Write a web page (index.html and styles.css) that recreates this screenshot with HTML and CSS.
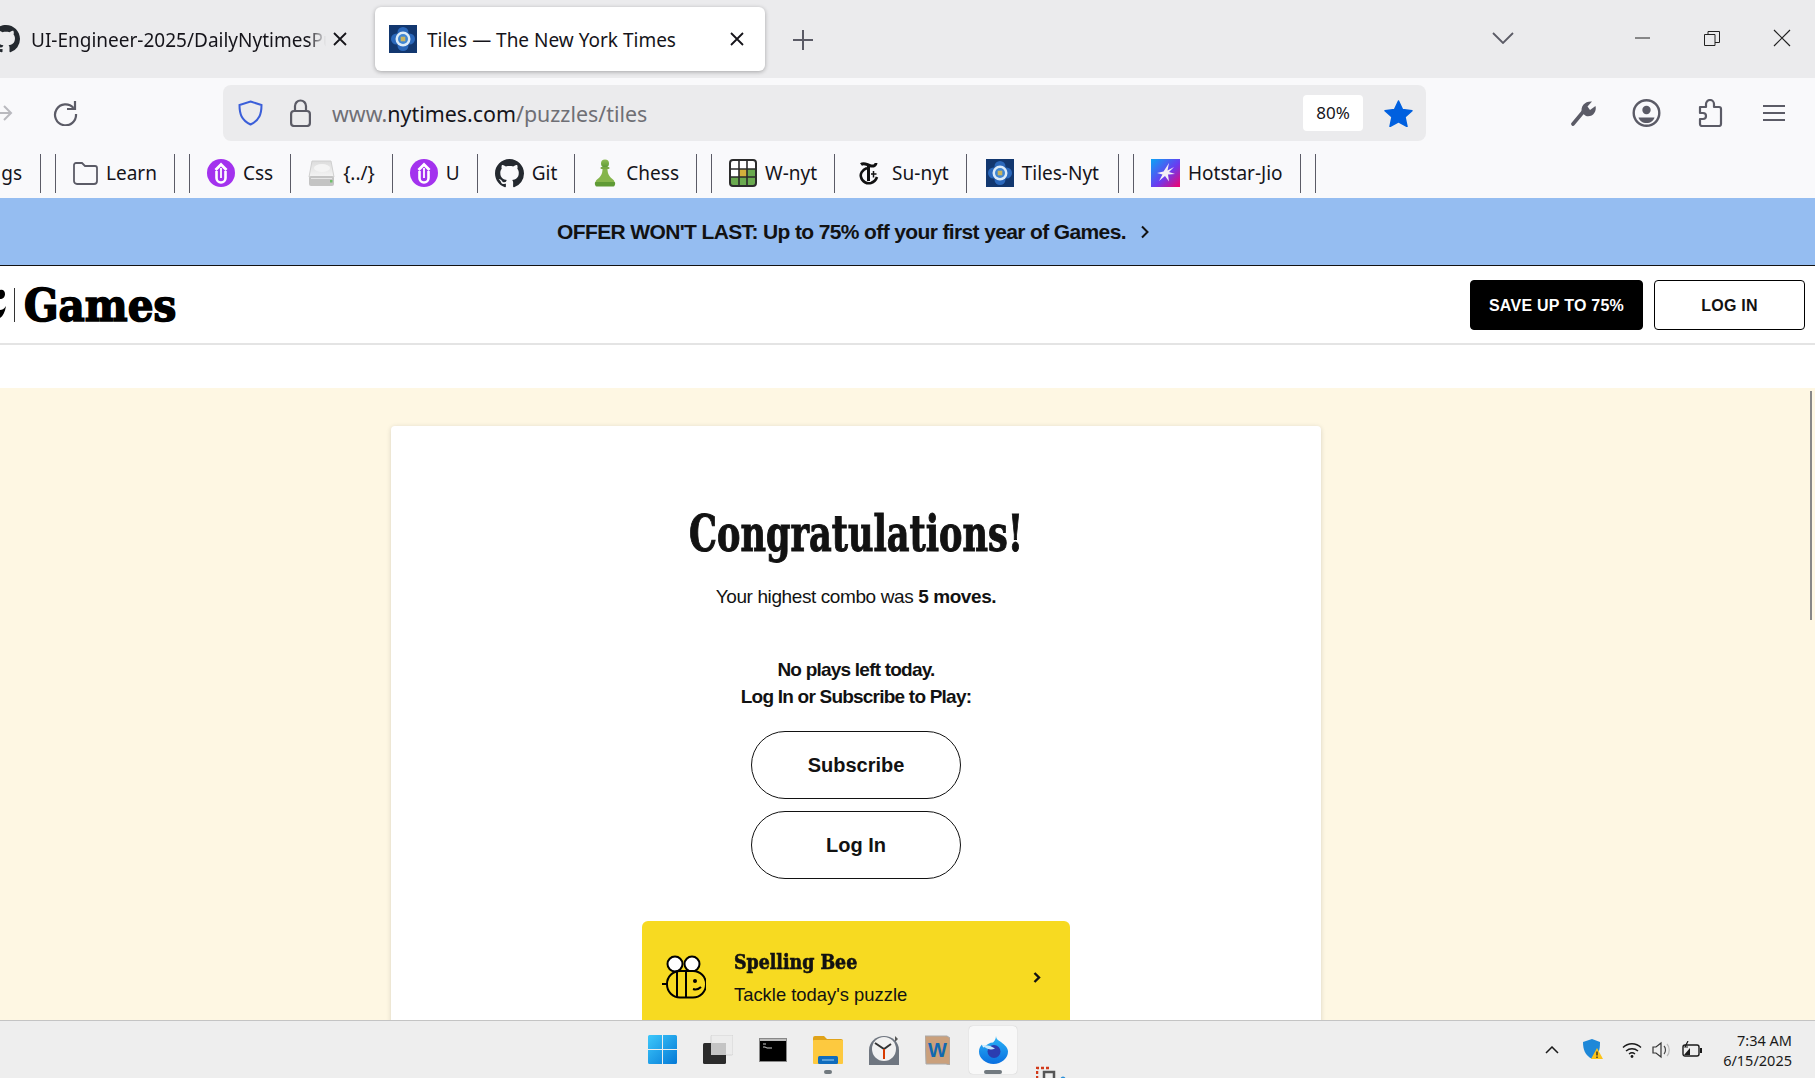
FILE: index.html
```html
<!DOCTYPE html>
<html lang="en">

<head>
  <meta charset="UTF-8" />
  <title>Tiles — The New York Times</title>
  <link rel="stylesheet" href="styles.css">
</head>

<body>
  <svg class="defs" width="0" height="0">
    <symbol id="gh" viewBox="0 0 16 16">
      <path d="M8 0C3.58 0 0 3.58 0 8c0 3.54 2.29 6.53 5.47 7.59.4.07.55-.17.55-.38 0-.19-.01-.82-.01-1.49-2.01.37-2.53-.49-2.69-.94-.09-.23-.48-.94-.82-1.13-.28-.15-.68-.52-.01-.53.63-.01 1.08.58 1.23.82.72 1.21 1.87.87 2.33.66.07-.52.28-.87.51-1.07-1.78-.2-3.64-.89-3.64-3.95 0-.87.31-1.59.82-2.15-.08-.2-.36-1.02.08-2.12 0 0 .67-.21 2.2.82.64-.18 1.32-.27 2-.27.68 0 1.36.09 2 .27 1.53-1.04 2.2-.82 2.2-.82.44 1.1.16 1.92.08 2.12.51.56.82 1.27.82 2.15 0 3.07-1.87 3.75-3.65 3.95.29.25.54.73.54 1.48 0 1.07-.01 1.93-.01 2.2 0 .21.15.46.55.38A8.013 8.013 0 0016 8c0-4.42-3.58-8-8-8z" fill="#24292f" />
    </symbol>
    <symbol id="tiles" viewBox="0 0 28 28">
      <rect width="28" height="28" fill="#12376f" />
      <circle cx="14" cy="7.500" r="5.500" fill="#2b68bb" />
      <circle cx="14" cy="20.500" r="5.500" fill="#2b68bb" />
      <circle cx="7.500" cy="14" r="5.500" fill="#2b68bb" />
      <circle cx="20.500" cy="14" r="5.500" fill="#2b68bb" />
      <circle cx="14" cy="14" r="7.500" fill="#dcebf8" />
      <circle cx="14" cy="14" r="5" fill="#3f86d4" />
      <rect x="11.700" y="11.700" width="4.600" height="4.600" fill="#c9b45e" />
    </symbol>
    <symbol id="upw" viewBox="0 0 28 28">
      <circle cx="14" cy="14" r="14" fill="#a332ee" />
      <path d="M8.500 11L14 5.500l5.500 5.500" fill="none" stroke="#fff" stroke-width="2.800" />
      <path d="M9.500 12v7a4.500 4.500 0 0 0 9 0v-7" fill="none" stroke="#fff" stroke-width="2.600" />
      <path d="M14 9v10" stroke="#fff" stroke-width="1.800" />
    </symbol>
  </svg>

  <div class="window">
    <div class="tabbar">
      <div class="tab">
        <svg class="tab-gh" width="28" height="28"><use href="#gh" /></svg>
        <span class="tab-title tab-fade">UI-Engineer-2025/DailyNytimesPuzzles</span>
        <svg class="tab-close" viewBox="0 0 16 16" width="16" height="16"><path d="M2 2l12 12M14 2L2 14" stroke="#15141a" stroke-width="1.800" /></svg>
      </div>
      <div class="tab tab-active">
        <svg width="28" height="28"><use href="#tiles" /></svg>
        <span class="tab-title">Tiles — The New York Times</span>
        <svg class="tab-close" viewBox="0 0 16 16" width="16" height="16"><path d="M2 2l12 12M14 2L2 14" stroke="#15141a" stroke-width="1.800" /></svg>
      </div>
      <svg class="new-tab" viewBox="0 0 20 20" width="20" height="20"><path d="M10 0v20M0 10h20" stroke="#5b5b66" stroke-width="2" /></svg>
      <div class="window-controls">
        <svg class="tab-list" viewBox="0 0 22 12" width="22" height="12"><path d="M1 1l10 10L21 1" fill="none" stroke="#5b5b66" stroke-width="1.800" /></svg>
        <svg class="win-min" viewBox="0 0 15 2" width="15" height="2"><path d="M0 1h15" stroke="#222" stroke-width="1" /></svg>
        <svg class="win-restore" viewBox="0 0 16 15" width="16" height="15"><path d="M.5 3.500h10.500v11H.5zM4 3.500V.5h11.500v11H11" fill="none" stroke="#222" /></svg>
        <svg class="win-close" viewBox="0 0 18 18" width="18" height="18"><path d="M1 1l16 16M17 1L1 17" stroke="#222" stroke-width="1.200" /></svg>
      </div>
    </div>

    <div class="toolbar">
      <svg class="nav-forward" viewBox="0 0 20 20" width="20" height="20"><path d="M-4 10h21M10 3l7 7-7 7" fill="none" stroke="#b9b9be" stroke-width="2" /></svg>
      <svg class="nav-reload" viewBox="0 0 26 26" width="26" height="26"><path d="M21.500 8A10.500 10.500 0 1 0 24 14" fill="none" stroke="#5b5b66" stroke-width="2.200" /><path d="M23 1v8h-8" fill="none" stroke="#5b5b66" stroke-width="2.200" /></svg>
      <div class="urlbar">
        <svg viewBox="0 0 25 26" width="25" height="26"><path d="M12.500 1.500L23.500 5c0 9-2 15-11 19.500C3.500 20 1.500 14 1.500 5z" fill="none" stroke="#3b5fd9" stroke-width="2" /></svg>
        <svg class="url-lock" viewBox="0 0 21 28" width="21" height="28"><path d="M5 13V7a5.500 5.500 0 0 1 11 0v6" fill="none" stroke="#5b5b66" stroke-width="2.200" /><rect x="1.100" y="12" width="18.800" height="15" rx="3" fill="none" stroke="#5b5b66" stroke-width="2.200" /></svg>
        <div class="url-text">www.<span class="url-host">nytimes.com</span>/puzzles/tiles</div>
        <div class="zoom-level">80%</div>
        <svg class="url-star" viewBox="0 0 29 27" width="29" height="27"><path d="M14.500 1l4 8.500 9.500 1.200-7 6.300 2 9.500-8.500-4.700L6 26.500l2-9.500-7-6.300 9.500-1.200z" fill="#0060df" stroke="#0060df" stroke-linejoin="round" stroke-width="1.500" /></svg>
      </div>
      <div class="toolbar-right">
        <svg viewBox="0 0 27 26" width="27" height="26"><path d="M3 24L13 12" stroke="#5b5b66" stroke-width="3.600" stroke-linecap="round" /><path d="M12 13C10 6 15 1 22 1.500L17.500 6.500 20 10l5.500-4c1.500 6-3 11.500-9.500 10z" fill="#5b5b66" /></svg>
        <svg viewBox="0 0 29 28" width="29" height="28"><circle cx="14.500" cy="14" r="12.800" fill="none" stroke="#5b5b66" stroke-width="2.400" /><circle cx="14.500" cy="11" r="4.200" fill="#5b5b66" /><path d="M6.500 18.500h16c-1 3.500-4 5.500-8 5.500s-7-2-8-5.500z" fill="#5b5b66" /></svg>
        <svg class="tool-puzzle" viewBox="0 0 25 28" width="25" height="28"><path d="M2 8H8V5a4 4 0 0 1 8 0v3h5a2 2 0 0 1 2 2v15a2 2 0 0 1-2 2H4a2 2 0 0 1-2-2v-5h3a3 3 0 0 0 0-6H2z" fill="none" stroke="#5b5b66" stroke-width="2.200" stroke-linejoin="round" /></svg>
        <svg class="tool-menu" viewBox="0 0 22 18" width="22" height="18"><path d="M0 2h22M0 9h22M0 16h22" stroke="#5b5b66" stroke-width="2.200" /></svg>
      </div>
    </div>

    <div class="bookmarks">
      <span class="bm bm-cut">gs</span>
      <i class="bm-sep"></i><i class="bm-sep bm-sep-pair"></i>
      <span class="bm"><svg viewBox="0 0 25 24" width="25" height="24"><path d="M1 4a2 2 0 0 1 2-2h6l3 3h10a2 2 0 0 1 2 2v13a3 3 0 0 1-3 3H4a3 3 0 0 1-3-3z" fill="none" stroke="#5b5b66" stroke-width="1.800" /></svg>Learn</span>
      <i class="bm-sep"></i><i class="bm-sep bm-sep-pair"></i>
      <span class="bm"><svg width="28" height="28"><use href="#upw" /></svg>Css</span>
      <i class="bm-sep"></i>
      <span class="bm"><svg viewBox="0 0 27 27" width="27" height="27"><defs><linearGradient id="hd" x1="0" y1="0" x2="0" y2="1"><stop offset="0" stop-color="#dcdcdc" /><stop offset="1" stop-color="#f4f4f4" /></linearGradient></defs><path d="M4 1h19l3 16H1z" fill="url(#hd)" stroke="#d0d0d0" /><ellipse cx="14" cy="8" rx="8" ry="4" fill="#f4f4f4" /><rect x="1" y="16" width="25" height="10" rx="2" fill="#c4c4c4" /><rect x="3" y="18" width="21" height="1" fill="#e6e6e6" /><rect x="22" y="20" width="2.500" height="2.500" fill="#6fbf6a" /></svg>{../}</span>
      <i class="bm-sep"></i>
      <span class="bm"><svg width="28" height="28"><use href="#upw" /></svg>U</span>
      <i class="bm-sep"></i>
      <span class="bm"><svg width="29" height="29"><use href="#gh" /></svg>Git</span>
      <i class="bm-sep"></i>
      <span class="bm bm-chess"><svg viewBox="0 0 26 28" width="26" height="28"><defs><linearGradient id="pw" x1="0" y1="0" x2="0" y2="1"><stop offset="0" stop-color="#8fbc55" /><stop offset="1" stop-color="#5f9a35" /></linearGradient></defs><circle cx="13" cy="4.500" r="4" fill="url(#pw)" /><rect x="8.500" y="8" width="9" height="2" rx="1" fill="#7aa845" /><path d="M10.500 10h5c0 5 2 8 6 11 1 1 1 2 1 3H3.500c0-1 0-2 1-3 4-3 6-6 6-11z" fill="#85b54b" /><path d="M3.500 23h19c1 0 1 4-1 4.500h-17c-2-.5-2-4.500-1-4.500z" fill="#5f9a35" /></svg>Chess</span>
      <i class="bm-sep"></i><i class="bm-sep bm-sep-pair"></i>
      <span class="bm"><svg viewBox="0 0 28 28" width="28" height="28"><rect x="1" y="1" width="26" height="26" rx="3" fill="#fff" /><rect x="10" y="10" width="8" height="8" fill="#d3b03c" /><rect x="18" y="10" width="9" height="8" fill="#6aaa4f" /><rect x="1" y="18" width="26" height="9" fill="#6aaa4f" /><path d="M10 1v26M18 1v26M1 10h26M1 18h26" stroke="#2b2b2b" stroke-width="1.600" /><rect x="1" y="1" width="26" height="26" rx="3" fill="none" stroke="#2b2b2b" stroke-width="2" /></svg>W-nyt</span>
      <i class="bm-sep"></i>
      <span class="bm bm-t"><svg viewBox="0 0 20 24" width="20" height="24"><g fill="none" stroke="#111"><path d="M8 7C3 9 1 13 2 16c1 5 6 7 10 6 3-1 5-3 6-6" stroke-width="2.600" /><path d="M2 3.500C5 1 8 4 12 5c3 .5 5-1 5-3" stroke-width="3" /><path d="M9.500 5v15" stroke-width="3" /><path d="M14.500 10v6.500M12 13h5.500" stroke-width="1.500" /></g></svg>Su-nyt</span>
      <i class="bm-sep"></i>
      <span class="bm bm-tiles"><svg width="28" height="28"><use href="#tiles" /></svg>Tiles-Nyt</span>
      <i class="bm-sep"></i><i class="bm-sep bm-sep-pair"></i>
      <span class="bm"><svg viewBox="0 0 29 28" width="29" height="28"><defs><linearGradient id="hs" x1="0" y1="0" x2="1" y2="1"><stop offset="0" stop-color="#0aa5f5" /><stop offset=".55" stop-color="#6a3cf0" /><stop offset="1" stop-color="#f5006a" /></linearGradient></defs><rect width="29" height="28" fill="url(#hs)" /><path d="M18 4l-1.500 7.500L23 8l-5 5 6 2-7 .5 1 7-4-5.500-6 5 3.500-6.500L6 14l6.500-1.500z" fill="#f3eef5" /></svg>Hotstar-Jio</span>
      <i class="bm-sep"></i><i class="bm-sep bm-sep-pair"></i>
    </div>

    <div class="page">
      <div class="promo">OFFER WON'T LAST: Up to 75% off your first year of Games.
        <svg viewBox="0 0 10 14" width="10" height="14"><path d="M2 1.500L7.500 7 2 12.500" fill="none" stroke="#121212" stroke-width="2" /></svg>
      </div>
      <header class="site-header">
        <svg class="logo-t" viewBox="0 0 6 34" width="6" height="34"><path d="M0 2c3-1 5 1 5 4S3 11 0 11zM0 22c2 0 4-1 6-4-1 6-3 10-6 12z" fill="#000" /></svg>
        <i class="logo-rule"></i>
        <span class="logo-games">Games</span>
        <div class="header-actions">
          <a class="btn-save">SAVE UP TO 75%</a>
          <a class="btn-login">LOG IN</a>
        </div>
      </header>
      <div class="header-gap"></div>
      <main class="game-bg">
        <section class="card">
          <h1>Congratulations!</h1>
          <p class="combo">Your highest combo was <b>5 moves.</b></p>
          <p class="no-plays">No plays left today.<br>Log In or Subscribe to Play:</p>
          <a class="pill">Subscribe</a>
          <a class="pill">Log In</a>
          <div class="promo-card">
            <svg class="bee" viewBox="0 0 44 44" width="44" height="44">
              <ellipse cx="13" cy="9" rx="7.500" ry="7.500" fill="#fff" stroke="#000" stroke-width="2" />
              <ellipse cx="30" cy="9" rx="7.500" ry="7.500" fill="#fff" stroke="#000" stroke-width="2" />
              <rect x="5" y="16" width="39" height="26.500" rx="13" fill="#f7da21" stroke="#000" stroke-width="2" />
              <path d="M15 16v26M24 16v26M0 29h5" stroke="#000" stroke-width="2" fill="none" />
              <circle cx="33" cy="26" r="2" fill="#000" />
              <path d="M31 34c3 1 6 0 8-2" stroke="#000" stroke-width="2" fill="none" />
            </svg>
            <div class="promo-text">
              <strong>Spelling Bee</strong>
              <span>Tackle today's puzzle</span>
            </div>
            <svg class="promo-arrow" viewBox="0 0 9 11" width="9" height="11"><path d="M1.500 1l4.500 4.500L1.500 10" fill="none" stroke="#121212" stroke-width="2.400" /></svg>
          </div>
        </section>
      </main>
      <i class="scroll-thumb"></i>
    </div>

    <footer class="taskbar">
      <div class="task-icons">
        <svg viewBox="0 0 29 29" width="29" height="29"><defs><linearGradient id="win" x1="0" y1="0" x2="1" y2="1"><stop offset="0" stop-color="#3dc8fb" /><stop offset="1" stop-color="#0479d6" /></linearGradient></defs><path d="M0 1.500A1.500 1.500 0 0 1 1.500 0H14v14H0zM15 0h12.500A1.500 1.500 0 0 1 29 1.500V14H15zM0 15h14v14H1.500A1.500 1.500 0 0 1 0 27.500zM15 15h14v12.500a1.500 1.500 0 0 1-1.500 1.500H15z" fill="url(#win)" /></svg>
        <svg viewBox="0 0 30 29" width="30" height="29"><rect x="8" y="0" width="22" height="20" rx="1.500" fill="#ececec" stroke="#d4d4d4" /><rect x="0" y="8" width="23" height="21" rx="1.500" fill="#2b2b2b" /><rect x="8" y="8" width="15" height="12" fill="#c4c4c4" /></svg>
        <svg viewBox="0 0 28 24" width="28" height="24"><rect x=".5" y=".5" width="27" height="23" fill="#000" stroke="#888" /><rect x="1" y="1" width="26" height="2" fill="#bbb" /><path d="M4 6h3M4 9h2l2 1h5" stroke="#ccc" stroke-width="1" fill="none" /></svg>
        <span class="task-running"><svg viewBox="0 0 30 28" width="30" height="28"><path d="M0 2a2 2 0 0 1 2-2h9l3 3h14a2 2 0 0 1 2 2v3H0z" fill="#e0a31a" /><rect y="4" width="30" height="24" rx="1" fill="#fdc93f" /><rect x="5" y="20" width="20" height="8" rx="1.500" fill="#0f6cbd" /><path d="M9 24h12" stroke="#9fd2f5" stroke-width="1" /></svg></span>
        <svg viewBox="0 0 30 30" width="30" height="30"><path d="M26 1l3 3-3 3z" fill="#555" /><path d="M15 1c8 0 15 6 15 14v15H0V15C0 7 7 1 15 1z" fill="#6f7680" /><circle cx="15" cy="14" r="12" fill="#f1f1f1" /><path d="M6 8l9 6 7-5" fill="none" stroke="#333" stroke-width="2" /><path d="M15 14v10" stroke="#d83b01" stroke-width="2" /></svg>
        <svg viewBox="0 0 25 30" width="25" height="30"><path d="M0 1h22l3 2v27l-4-1H1z" fill="#caa07c" stroke="#aaa" /><text class="w-glyph" x="3" y="22">W</text></svg>
        <span class="task-active">
          <svg viewBox="0 0 29 28" width="29" height="28"><defs><linearGradient id="fx" x1="0" y1="0" x2="0" y2="1"><stop offset="0" stop-color="#2ab4f7" /><stop offset="1" stop-color="#0a6fe0" /></linearGradient></defs><path d="M17 0c0 3 2 4 5 6 4 3 7 6 7 9.500a14.500 12.500 0 1 1-29 0c0-3 1-5 3-7 .5 2 1 3 2 3 2-3 6-5 9-5 1-1 3-3 3-6.500z" fill="url(#fx)" /><circle cx="15" cy="15.500" r="6.500" fill="#2b3db0" /><path d="M3 9.500c4-1 9 0 13 3-3 1.500-7 1-9-.5z" fill="#c6e8fb" /></svg>
          <i class="task-dot"></i>
        </span>
        <svg class="task-snip" viewBox="0 0 30 14" width="30" height="14"><path d="M1 13V2h14" fill="none" stroke="#d13a1a" stroke-width="2.500" stroke-dasharray="3 2" /><path d="M8 14V6h10v8" fill="none" stroke="#555" stroke-width="2.500" /><circle cx="27" cy="13" r="2.500" fill="#2a8fd8" /></svg>
      </div>
      <div class="tray">
        <svg viewBox="0 0 14 8" width="14" height="8"><path d="M1 7l6-6 6 6" fill="none" stroke="#1a1a1a" stroke-width="1.500" /></svg>
        <svg class="tray-shield" viewBox="0 0 20 21" width="20" height="21"><path d="M9 0l8 3c0 8-1 13-8 17C2 16 0 11 0 3z" fill="#1e88d8" /><path d="M14 9l6 11H8z" fill="#fcc419" /><path d="M14 12.500v4M14 17.500v1.500" stroke="#222" stroke-width="1.300" /></svg>
        <svg class="tray-wifi" viewBox="0 0 20 16" width="20" height="16"><path d="M1 5.500c5-5 13-5 18 0M4 9c3.500-3 8.500-3 12 0M7 12c1.800-1.400 4.200-1.400 6 0" fill="none" stroke="#1a1a1a" stroke-width="1.400" /><circle cx="10" cy="14.500" r="1.400" fill="#1a1a1a" /></svg>
        <svg viewBox="0 0 20 18" width="20" height="18"><path d="M1 6h3l5-4v14l-5-4H1z" fill="none" stroke="#333" stroke-width="1.200" /><path d="M12 5c2 2 2 6 0 8" fill="none" stroke="#444" stroke-width="1.200" /><path d="M15 3c3 3 3 9 0 12" fill="none" stroke="#bbb" stroke-width="1.200" /></svg>
        <svg viewBox="0 0 20 18" width="20" height="18"><rect x="1" y="4" width="16" height="11" rx="2" fill="none" stroke="#1a1a1a" stroke-width="1.400" /><path d="M2 14l6-7v7z" fill="#1a1a1a" /><rect x="18" y="7" width="2" height="5" fill="#1a1a1a" /><path d="M6 0L3 6h3" fill="none" stroke="#1a1a1a" stroke-width="1.200" /></svg>
        <div class="tray-clock">7:34 AM<br>6/15/2025</div>
      </div>
    </footer>
  </div>
</body>

</html>
```

FILE: styles.css
```css
* {
  box-sizing: border-box;
}

html,
body {
  margin: 0;
  height: 100%;
  overflow: hidden;
}

.defs {
  position: absolute;
}

.window {
  display: flex;
  flex-direction: column;
  height: 1078px;
  font-family: "Noto Sans", "Open Sans", Arial, sans-serif;
  color: #15141a;
  background: #fff;
}

svg {
  display: block;
  flex-shrink: 0;
}

/* tabs */
.tabbar {
  display: flex;
  align-items: flex-start;
  height: 78px;
  background: #ebebed;
  overflow: hidden;
}

.tab {
  display: flex;
  align-items: center;
  height: 64px;
  margin-top: 7px;
  font-size: 19px;
}

.tab:first-child {
  width: 375px;
  padding-right: 27px;
}

.tab-gh {
  margin-left: -8px;
  margin-right: 11px;
}

.tab-title {
  flex: 1;
  margin-left: 10px;
  padding-top: 2px;
  white-space: nowrap;
  overflow: hidden;
}

.tab-gh + .tab-title {
  margin-left: 0;
}

.tab-fade {
  -webkit-mask-image: linear-gradient(to right, #000 94%, transparent);
  mask-image: linear-gradient(to right, #000 94%, transparent);
}

.tab-active {
  width: 390px;
  padding: 0 20px 0 14px;
  background: #fff;
  border-radius: 6px;
  box-shadow: 0 1px 4px rgba(0, 0, 0, 0.3);
}

.tab-close {
  margin-left: 6px;
}

.new-tab {
  margin: 30px 0 0 28px;
}

.window-controls {
  display: flex;
  align-items: center;
  margin-left: auto;
  height: 78px;
  padding-right: 24px;
  transform: translateY(-1px);
}

.win-min {
  margin-left: 121px;
}

.win-restore {
  margin-left: 54px;
}

.win-close {
  margin-left: 53px;
}

/* toolbar */
.toolbar {
  display: flex;
  align-items: center;
  height: 70px;
  background: #f9f9fb;
}

.nav-forward {
  margin-left: -6px;
}

.nav-reload {
  margin-left: 38px;
}

.urlbar {
  display: flex;
  align-items: center;
  width: 1203px;
  height: 56px;
  margin-left: 145px;
  padding: 0 13px 0 15px;
  background: #ebebed;
  border-radius: 8px;
}

.url-lock {
  margin-left: 27px;
}

.url-text {
  flex: 1;
  margin-left: 21px;
  padding-top: 1px;
  font-size: 21.400px;
  color: #6f6f75;
}

.url-host {
  color: #15141a;
}

.zoom-level {
  width: 60px;
  height: 36px;
  margin-right: 21px;
  background: #fff;
  border-radius: 4px;
  font-size: 17px;
  line-height: 36px;
  text-align: center;
}

.toolbar-right {
  display: flex;
  align-items: center;
  gap: 35px;
  margin-left: 144px;
}

.tool-puzzle {
  margin-left: 2px;
}

.tool-menu {
  margin-left: 5px;
}

/* bookmarks */
.bookmarks {
  display: flex;
  align-items: center;
  height: 50px;
  background: #f9f9fb;
  font-size: 19px;
}

.bm {
  display: flex;
  align-items: center;
  gap: 8px;
  padding: 0 17px;
  white-space: nowrap;
}

.bm-t {
  gap: 13px;
  padding-left: 24px;
}

.bm-tiles {
  padding: 0 19px;
}

.bm-cut {
  width: 40px;
  padding: 0;
  justify-content: flex-end;
  padding-right: 18px;
}

.bm-sep {
  width: 1px;
  height: 39px;
  background: #5b5b66;
}

.bm-sep-pair {
  margin-left: 14px;
}

/* page */
.page {
  position: relative;
  display: flex;
  flex-direction: column;
  flex: 1;
  min-height: 0;
  overflow: hidden;
  font-family: "Liberation Sans", Arial, sans-serif;
  color: #121212;
}

.promo {
  display: flex;
  align-items: center;
  justify-content: center;
  gap: 14px;
  height: 68px;
  flex-shrink: 0;
  padding-right: 108px;
  background: #95bdf1;
  border-bottom: 1px solid #121212;
  font-size: 21px;
  font-weight: bold;
  letter-spacing: -0.630px;
}

.site-header {
  display: flex;
  align-items: center;
  height: 79px;
  flex-shrink: 0;
  border-bottom: 2px solid #e4e4e4;
}

.logo-rule {
  width: 1px;
  height: 34px;
  margin-left: 8px;
  background: #333;
}

.logo-games {
  margin-left: 9px;
  padding-top: 3px;
  font-family: "DejaVu Serif", serif;
  font-size: 45px;
  font-weight: bold;
  font-stretch: condensed;
  line-height: 50px;
  color: #000;
  -webkit-text-stroke: 1.500px #000;
}

.header-actions {
  display: flex;
  gap: 11px;
  margin-left: auto;
  margin-right: 10px;
}

.btn-save,
.btn-login {
  height: 50px;
  border: 1px solid #000;
  border-radius: 4px;
  font-size: 16px;
  font-weight: bold;
  letter-spacing: 0.250px;
  line-height: 50px;
  text-align: center;
}

.btn-save {
  width: 173px;
  background: #000;
  color: #fff;
}

.btn-login {
  width: 151px;
}

.header-gap {
  height: 43px;
  flex-shrink: 0;
}

.game-bg {
  flex: 1;
  padding-top: 38px;
  background: #fef7e3;
}

.card {
  display: flex;
  flex-direction: column;
  align-items: center;
  width: 930px;
  height: 800px;
  margin-left: 391px;
  padding-top: 80px;
  background: #fff;
  border-radius: 4px;
  box-shadow: 0 1px 5px rgba(0, 0, 0, 0.15);
}

h1 {
  margin: 0;
  font-family: "DejaVu Serif", serif;
  font-size: 50px;
  font-weight: bold;
  font-stretch: condensed;
  line-height: 56px;
  color: #121212;
  -webkit-text-stroke: 1px #121212;
  transform: scaleX(0.78);
}

.combo {
  margin: 22px 0 0;
  font-size: 19px;
  letter-spacing: -0.400px;
  line-height: 26px;
}

.no-plays {
  margin: 46px 0 0;
  font-size: 19px;
  font-weight: bold;
  letter-spacing: -0.780px;
  line-height: 27px;
  text-align: center;
}

.pill {
  display: block;
  width: 210px;
  height: 68px;
  margin-top: 12px;
  border: 1px solid #121212;
  border-radius: 34px;
  font-size: 20px;
  font-weight: bold;
  line-height: 66px;
  text-align: center;
}

.no-plays + .pill {
  margin-top: 21px;
}

.promo-card {
  display: flex;
  align-items: center;
  width: 428px;
  height: 112px;
  margin-top: 42px;
  padding: 0 28px 0 20px;
  background: #f7da21;
  border-radius: 6px;
}

.promo-text {
  display: flex;
  flex: 1;
  flex-direction: column;
  gap: 10px;
  margin-left: 28px;
}

.promo-text strong {
  font-family: "DejaVu Serif", serif;
  font-size: 21px;
  font-stretch: condensed;
  -webkit-text-stroke: 0.600px #121212;
  transform: scaleX(0.92);
  transform-origin: left;
}

.promo-text span {
  font-size: 18.400px;
}

.scroll-thumb {
  position: absolute;
  right: 3px;
  top: 193px;
  width: 2px;
  height: 229px;
  background: #888;
}

/* taskbar */
.taskbar {
  position: relative;
  display: flex;
  align-items: center;
  height: 58px;
  flex-shrink: 0;
  background: #eeeeee;
  border-top: 1px solid #c4c4c4;
}

.task-icons {
  display: flex;
  align-items: center;
  gap: 26px;
  margin-left: 648px;
}

.task-running {
  position: relative;
}

.task-running::after {
  content: "";
  position: absolute;
  left: 11px;
  bottom: -10px;
  width: 8px;
  height: 4px;
  border-radius: 2px;
  background: #71797f;
}

.task-active {
  position: relative;
  display: flex;
  justify-content: center;
  padding-top: 10px;
  width: 48px;
  height: 48px;
  margin-left: -7px;
  background: #f8f8f8;
  border-radius: 4px;
  box-shadow: 0 0 1px rgba(0, 0, 0, 0.25);
}

.task-dot {
  position: absolute;
  bottom: 0;
  left: 15px;
  width: 18px;
  height: 4px;
  border-radius: 2px;
  background: #71797f;
}

.task-snip {
  align-self: flex-end;
  margin: 0 0 -6px -7px;
}

.w-glyph {
  font-family: "Liberation Sans", sans-serif;
  font-size: 20px;
  font-weight: bold;
  fill: #1168b0;
}

.tray {
  display: flex;
  align-items: center;
  gap: 10px;
  margin-left: auto;
  padding-right: 23px;
}

.tray-shield {
  margin-left: 14px;
}

.tray-wifi {
  margin-left: 9px;
}

.tray-clock {
  margin-left: 11px;
  font-family: "Noto Sans", sans-serif;
  font-size: 14.500px;
  line-height: 20px;
  text-align: right;
  color: #1a1a1a;
}
```
